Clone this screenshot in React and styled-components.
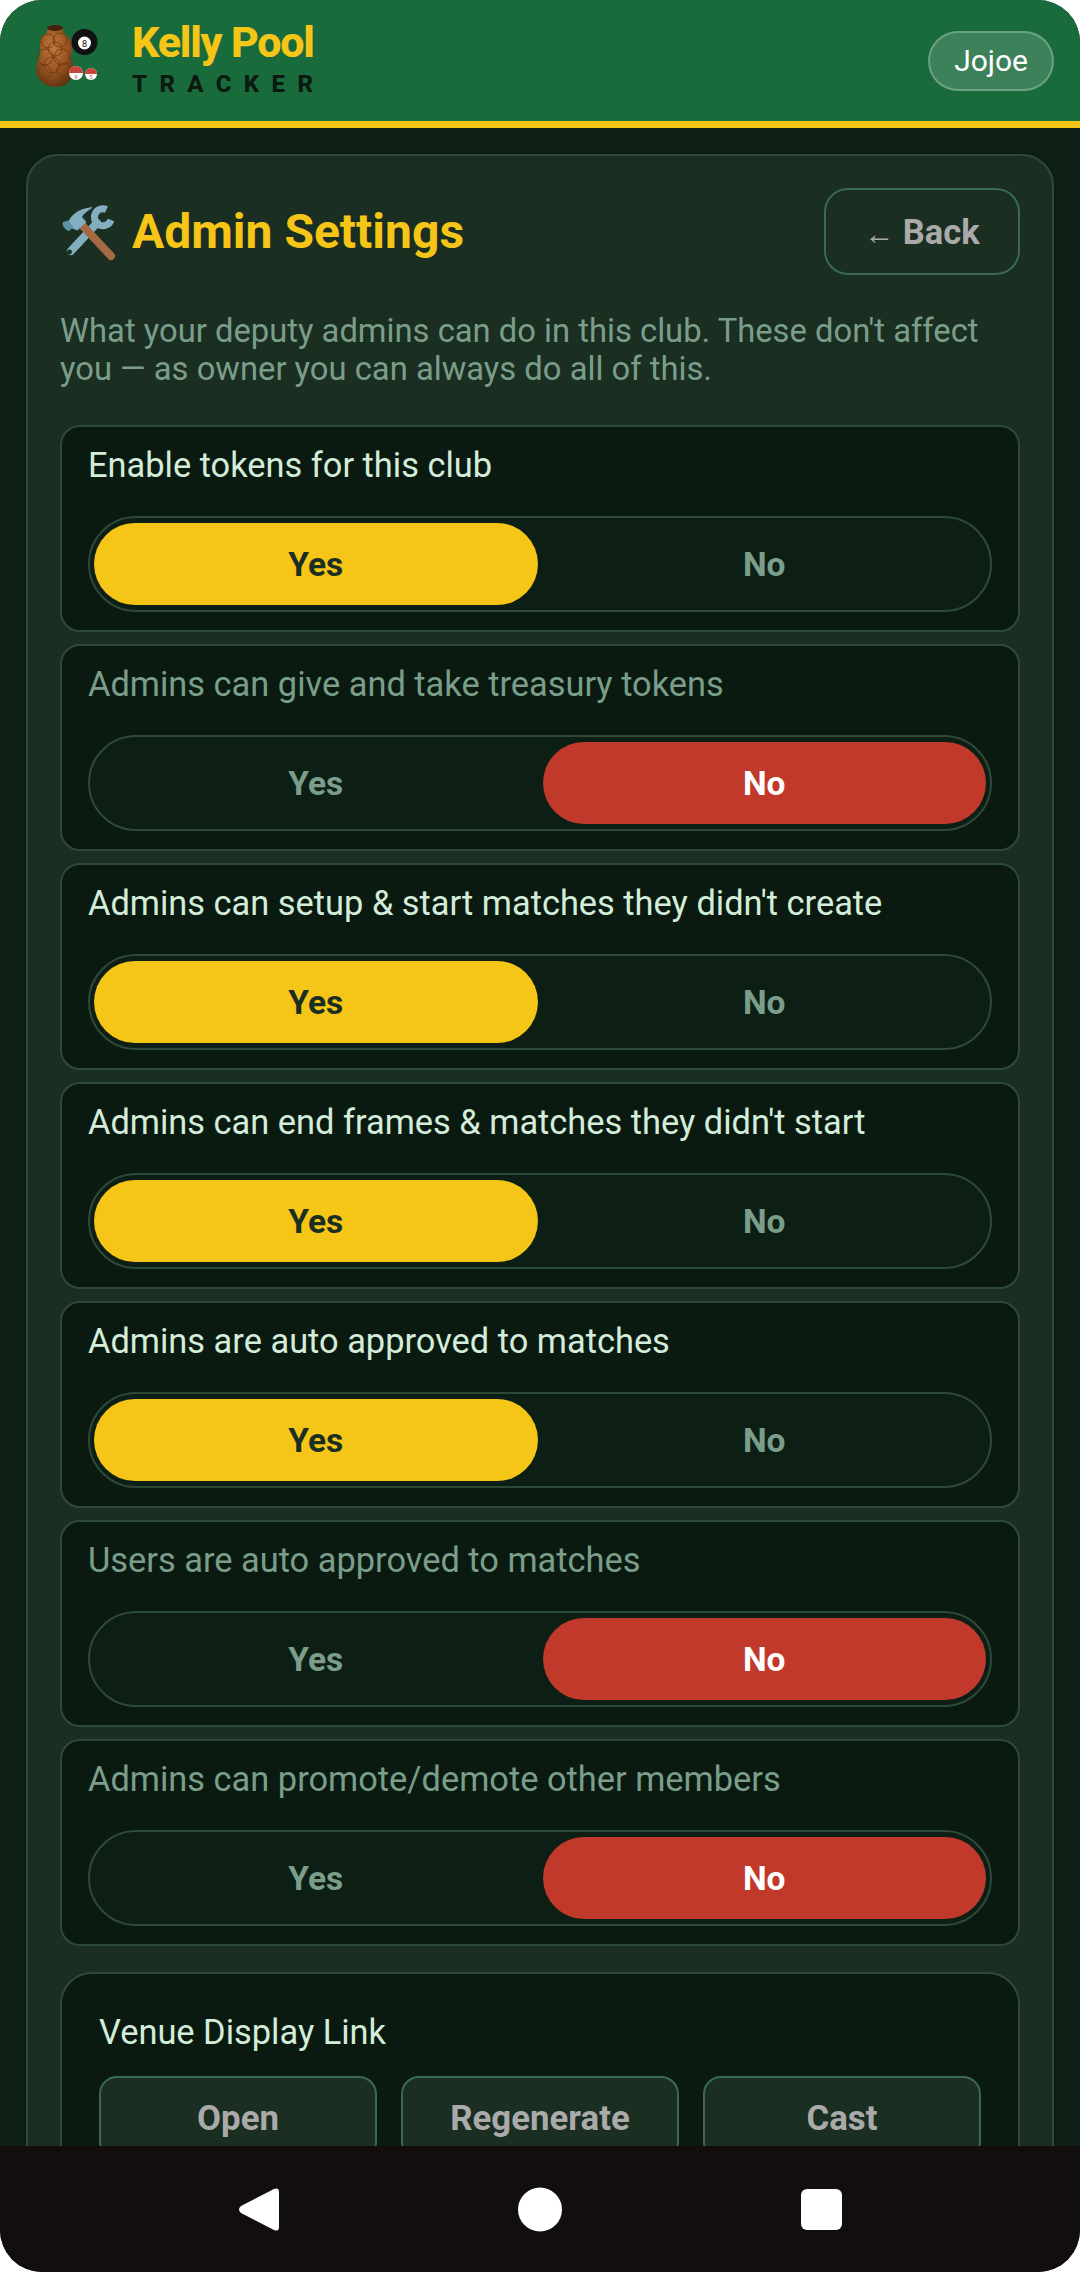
import styled, { createGlobalStyle } from 'styled-components';

const GlobalStyle = createGlobalStyle`
  * { box-sizing: border-box; }
  html, body { margin: 0; padding: 0; background: #fff; }
  body { font-family: Roboto, "Liberation Sans", sans-serif; }
`;

const settings = [
  { label: 'Enable tokens for this club', on: true },
  { label: 'Admins can give and take treasury tokens', on: false },
  { label: "Admins can setup & start matches they didn't create", on: true },
  { label: "Admins can end frames & matches they didn't start", on: true },
  { label: 'Admins are auto approved to matches', on: true },
  { label: 'Users are auto approved to matches', on: false },
  { label: 'Admins can promote/demote other members', on: false },
];

const Logo = () => (
  <svg width="68" height="74" viewBox="33 22 68 74">
    <defs>
      <radialGradient id="shaker" cx="45%" cy="35%" r="70%">
        <stop offset="0%" stopColor="#c27a3c" />
        <stop offset="60%" stopColor="#96521f" />
        <stop offset="100%" stopColor="#5e2f10" />
      </radialGradient>
    </defs>
    <path d="M47 27 C47 24 63 24 63 27 L63 31 C69 34 72 39 72 46 C72 51 71 53 71 57 C73 63 74 70 71 76 C68 83 61 85 55 85 C48 85 41 81 38 74 C35 67 37 59 40 54 C41 50 40 46 40 42 C40 37 43 33 47 31 Z" fill="url(#shaker)" />
    <ellipse cx="55" cy="26" rx="8" ry="3" fill="#4a1f0c" />
    <g fill="none" stroke="#6b3614" strokeWidth="0.9" opacity="0.9">
      <circle cx="48" cy="39" r="7" />
      <circle cx="60" cy="38" r="7" />
      <circle cx="55" cy="47" r="7" />
      <circle cx="45" cy="55" r="8" />
      <circle cx="62" cy="55" r="8" />
      <circle cx="52" cy="63" r="8" />
      <circle cx="64" cy="68" r="7" />
      <circle cx="44" cy="70" r="7" />
    </g>
    <circle cx="84.5" cy="40" r="13" fill="#111" />
    <circle cx="84.5" cy="41" r="6.5" fill="#fff" />
    <text x="84.5" y="44.5" fontSize="9" textAnchor="middle" fill="#111" fontFamily="Roboto, sans-serif">8</text>
    <circle cx="76" cy="71" r="7" fill="#fff" />
    <path d="M69 71 a7 7 0 0 1 14 0 Z" fill="#c8453a" />
    <text x="76" y="77" fontSize="6" textAnchor="middle" fill="#c8453a" fontFamily="Roboto, sans-serif">9</text>
    <circle cx="91" cy="72" r="6" fill="#fff" />
    <path d="M85 72 a6 6 0 0 1 12 0 Z" fill="#c8453a" />
    <text x="91" y="77" fontSize="5.5" textAnchor="middle" fill="#c8453a" fontFamily="Roboto, sans-serif">5</text>
  </svg>
);

const ToolsIcon = () => (
  <svg width="60" height="58" viewBox="11 12 60 58">
    <path d="M22 60 L48 32" stroke="#82aec0" strokeWidth="8" strokeLinecap="round" fill="none" />
    <circle cx="20.5" cy="61" r="2.4" fill="#1a2e22" />
    <path d="M57.5 18.500 A8.500 8.500 0 1 0 62 29" stroke="#82aec0" strokeWidth="7" fill="none" />
    <path d="M33 34 L62 65" stroke="#a56a43" strokeWidth="8" strokeLinecap="round" fill="none" />
    <path d="M19 32 C21 25 28 18 43 16 L43 17 C37 21 34 24 33 26 L37.500 31 L28.500 39.500 L22 37 Z" fill="#82aec0" />
    <path d="M14 31 L19 29.500 L24.500 36 L20 40 C17 39 14 36 13.500 33 Z" fill="#5b93a8" />
  </svg>
);

const Toggle = ({ on }) => (
  <Track>
    <Option $active={on} $tone="yes">Yes</Option>
    <Option $active={!on} $tone="no">No</Option>
  </Track>
);

const App = () => {
  return (
    <Shell>
      <GlobalStyle />
      <Header>
        <Brand>
          <Logo />
          <BrandText>
            <BrandName>Kelly Pool</BrandName>
            <BrandSub>TRACKER</BrandSub>
          </BrandText>
        </Brand>
        <UserPill>Jojoe</UserPill>
      </Header>
      <Main>
        <Card>
          <CardTop>
            <Title>
              <ToolsIcon />
              <span>Admin Settings</span>
            </Title>
            <BackButton><Arrow>←</Arrow> Back</BackButton>
          </CardTop>
          <Intro>
            What your deputy admins can do in this club. These don't affect you — as owner you can always do all of this.
          </Intro>
          <List>
            {settings.map((s) => (
              <Row key={s.label}>
                <Label $dim={!s.on}>{s.label}</Label>
                <Toggle on={s.on} />
              </Row>
            ))}
          </List>
          <Venue>
            <VenueLabel>Venue Display Link</VenueLabel>
            <VenueActions>
              <VenueButton>Open</VenueButton>
              <VenueButton>Regenerate</VenueButton>
              <VenueButton>Cast</VenueButton>
            </VenueActions>
          </Venue>
        </Card>
      </Main>
      <NavBar>
        <svg width="41" height="45" viewBox="0 0 41 45">
          <path d="M36 2 L3 19 Q-1 22.500 3 26 L36 43 Q41 45 41 40 L41 5 Q41 0 36 2 Z" fill="#fff" />
        </svg>
        <svg width="44" height="45" viewBox="0 0 44 45">
          <circle cx="22" cy="22.500" r="22" fill="#fff" />
        </svg>
        <svg width="41" height="41" viewBox="0 0 41 41">
          <rect width="41" height="41" rx="6" fill="#fff" />
        </svg>
      </NavBar>
    </Shell>
  );
};

const Shell = styled.div`
  width: 1080px;
  height: 2272px;
  border-radius: 42px;
  overflow: hidden;
  background: #0d1f14;
  display: flex;
  flex-direction: column;
`;

const Header = styled.header`
  height: 128px;
  flex: none;
  background: #1a6b3c;
  border-bottom: 7px solid #f5c518;
  padding: 0 26px 0 33px;
  display: flex;
  align-items: center;
  justify-content: space-between;
`;

const Brand = styled.div`
  display: flex;
  align-items: center;
  gap: 31px;
`;

const BrandText = styled.div`
  display: flex;
  flex-direction: column;
  padding-bottom: 5px;
`;

const BrandName = styled.div`
  font-size: 43px;
  line-height: 46px;
  font-weight: 800;
  letter-spacing: -1.2px;
  color: #f5c518;
`;

const BrandSub = styled.div`
  margin-top: 5px;
  font-size: 24px;
  line-height: 28px;
  font-weight: 800;
  letter-spacing: 12.4px;
  color: #0a1a10;
`;

const UserPill = styled.div`
  height: 60px;
  padding: 0 24px;
  display: flex;
  align-items: center;
  border-radius: 30px;
  border: 2px solid rgba(255, 255, 255, 0.25);
  background: rgba(255, 255, 255, 0.15);
  color: #fff;
  font-size: 30px;
`;

const Main = styled.main`
  flex: 1;
  min-height: 0;
  overflow: hidden;
  padding: 26px 26px 0;
`;

const Card = styled.section`
  background: #1a2e22;
  border: 2px solid #2d4a38;
  border-radius: 32px;
  padding: 32px;
`;

const CardTop = styled.div`
  display: flex;
  align-items: center;
  justify-content: space-between;
`;

const Title = styled.h1`
  margin: 0;
  display: flex;
  align-items: center;
  gap: 12px;
  font-size: 48px;
  font-weight: 700;
  color: #f5c518;
`;

const BackButton = styled.button`
  width: 196px;
  height: 87px;
  padding: 0;
  border: 2px solid #3a6a4f;
  border-radius: 24px;
  background: #1a2e22;
  color: #aaaaaa;
  font-family: inherit;
  font-size: 34.5px;
  font-weight: 700;
`;

const Arrow = styled.span`
  font-size: 30px;
`;

const Intro = styled.p`
  margin: 37px 0 37px;
  font-size: 32.75px;
  line-height: 38px;
  color: #7a9e8a;
`;

const List = styled.div`
  display: flex;
  flex-direction: column;
  gap: 12px;
`;

const Row = styled.div`
  height: 207px;
  padding: 18px 26px;
  background: #0a1a10;
  border: 2px solid #2d4a38;
  border-radius: 20px;
`;

const Label = styled.div`
  font-size: 34.4px;
  line-height: 40px;
  margin-bottom: 31px;
  color: ${(p) => (p.$dim ? '#7a9e8a' : '#d4edda')};
`;

const Track = styled.div`
  height: 96px;
  padding: 5px 4px;
  display: grid;
  grid-template-columns: 1fr 1fr;
  gap: 5px;
  background: #0d1f14;
  border: 2px solid #2d4a38;
  border-radius: 48px;
`;

const Option = styled.div`
  display: flex;
  align-items: center;
  justify-content: center;
  border-radius: 41px;
  font-size: 33.5px;
  font-weight: 700;
  background: ${(p) => (!p.$active ? 'transparent' : p.$tone === 'yes' ? '#f5c518' : '#c0392b')};
  color: ${(p) => (!p.$active ? '#7a9e8a' : p.$tone === 'yes' ? '#1a2e22' : '#fff')};
`;

const Venue = styled.div`
  margin-top: 26px;
  padding: 38px 37px;
  background: #0a1a10;
  border: 2px solid #2d4a38;
  border-radius: 32px;
`;

const VenueLabel = styled.div`
  font-size: 34.4px;
  line-height: 40px;
  margin-bottom: 24px;
  color: #d4edda;
`;

const VenueActions = styled.div`
  display: grid;
  grid-template-columns: repeat(3, 1fr);
  gap: 24px;
`;

const VenueButton = styled.button`
  height: 84px;
  padding: 0;
  border: 2px solid #3a6a4f;
  border-radius: 18px;
  background: #1a2e22;
  color: #aaaaaa;
  font-family: inherit;
  font-size: 34.8px;
  font-weight: 700;
`;

const NavBar = styled.nav`
  height: 126px;
  flex: none;
  background: #120e0e;
  display: flex;
  align-items: center;
  justify-content: center;
  gap: 239px;
`;

export default App;
